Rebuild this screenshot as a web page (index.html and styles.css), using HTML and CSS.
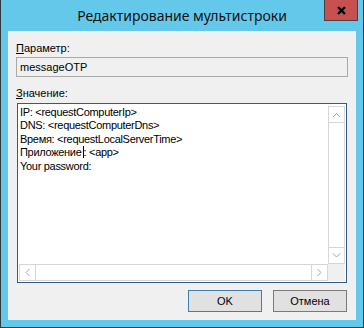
FILE: index.html
```html
<!DOCTYPE html>
<html lang="ru">
<head>
    <meta charset="UTF-8">
    <meta name="viewport" content="width=device-width, initial-scale=1.0">
    <title>Редактирование мультистроки</title>
    <link rel="stylesheet" href="styles.css">
</head>
<body>
    <div class="window">
        <div class="titlebar">
            <span class="title">Редактирование мультистроки</span>
            <button class="close-btn" title="Закрыть">
                <svg width="9" height="9" viewBox="0 0 9 9">
                    <path d="M1 1 L8 8 M8 1 L1 8" stroke="#000" stroke-width="2.4" fill="none"/>
                </svg>
            </button>
        </div>

        <div class="client">
            <label class="field-label" for="param"><u>П</u>араметр:</label>
            <div class="readonly-input" id="param">messageOTP</div>

            <label class="field-label value-label"><u>З</u>начение:</label>
            <div class="memo">
                <div class="memo-text">
                    <div>IP: &lt;requestComputerIp&gt;</div>
                    <div>DNS: &lt;requestComputerDns&gt;</div>
                    <div>Время: &lt;requestLocalServerTime&gt;</div>
                    <div>Приложение<span class="caret"></span>: &lt;app&gt;</div>
                    <div>Your password:</div>
                </div>

                <div class="vscroll">
                    <div class="sb-btn">
                        <svg width="15" height="15" viewBox="0 0 15 15">
                            <polyline points="4,10 7.5,6.5 11,10" stroke="#a6a6a6" stroke-width="1" fill="none"/>
                        </svg>
                    </div>
                    <div class="sb-track"></div>
                    <div class="sb-btn">
                        <svg width="15" height="15" viewBox="0 0 15 15">
                            <polyline points="4,5.5 7.5,9 11,5.5" stroke="#a6a6a6" stroke-width="1" fill="none"/>
                        </svg>
                    </div>
                </div>

                <div class="hscroll">
                    <div class="sb-btn">
                        <svg width="15" height="15" viewBox="0 0 15 15">
                            <polyline points="9.5,4 6,7.5 9.5,11" stroke="#a6a6a6" stroke-width="1" fill="none"/>
                        </svg>
                    </div>
                    <div class="sb-track"></div>
                    <div class="sb-btn">
                        <svg width="15" height="15" viewBox="0 0 15 15">
                            <polyline points="5.5,4 9,7.5 5.5,11" stroke="#a6a6a6" stroke-width="1" fill="none"/>
                        </svg>
                    </div>
                </div>

                <div class="sb-corner"></div>
            </div>

            <div class="dialog-buttons">
                <button class="btn btn-default">OK</button>
                <button class="btn">Отмена</button>
            </div>
        </div>
    </div>
</body>
</html>
```

FILE: styles.css
```css
body {
    margin: 0;
    font-family: "Liberation Sans", Arial, sans-serif;
    font-size: 11px;
    color: #000;
}

.window {
    width: 364px;
    height: 328px;
    box-sizing: border-box;
    background-color: #64c8eb;
    border: 1px solid #2e3a40;
    border-top: none;
    padding: 0 7px 7px 7px;
    display: flex;
    flex-direction: column;
}

.titlebar {
    height: 31px;
    display: grid;
}

.title {
    grid-area: 1 / 1;
    justify-self: center;
    padding-top: 6px;
    font-family: "Noto Sans", "Open Sans", sans-serif;
    font-size: 14px;
    line-height: 20px;
    color: #111;
}

.close-btn {
    grid-area: 1 / 1;
    justify-self: end;
    align-self: start;
    width: 34px;
    height: 21px;
    margin-right: -2px;
    padding: 0;
    border: 1px solid #4a4040;
    border-top: none;
    background-color: #c75050;
    display: flex;
    align-items: center;
    justify-content: center;
}

.client {
    flex: 1;
    background-color: #f0f0f0;
    padding: 11px 8px 0 8px;
    display: flex;
    flex-direction: column;
}

.field-label {
    line-height: 13px;
    height: 13px;
}

.field-label u {
    text-underline-offset: 1px;
}

.readonly-input {
    margin-top: 2px;
    height: 20px;
    box-sizing: border-box;
    border: 1px solid #a9a9a9;
    background-color: #f0f0f0;
    padding-left: 3px;
    line-height: 19px;
}

.value-label {
    margin-top: 10px;
}

.memo {
    margin-top: 3px;
    margin-left: 1px;
    width: 330px;
    height: 180px;
    box-sizing: border-box;
    border: 1px solid #2f5b86;
    background-color: #fff;
    padding: 1px;
    display: grid;
    grid-template-columns: 1fr 17px;
    grid-template-rows: 1fr 17px;
}

.memo-text {
    padding: 1px 0 0 1px;
    line-height: 13.4px;
    letter-spacing: -0.3px;
    white-space: nowrap;
    overflow: hidden;
}

.caret {
    display: inline-block;
    width: 1px;
    height: 12px;
    margin-left: 1px;
    background-color: #000;
    vertical-align: -2px;
}

.vscroll {
    display: flex;
    flex-direction: column;
    border: 1px solid #d6d6d6;
    box-sizing: border-box;
    margin-top: 1px;
}

.hscroll {
    display: flex;
    border: 1px solid #d6d6d6;
    box-sizing: border-box;
}

.sb-btn {
    width: 15px;
    height: 15px;
    display: flex;
}

.vscroll .sb-btn:first-child {
    border-bottom: 1px solid #d6d6d6;
}

.vscroll .sb-btn:last-child {
    border-top: 1px solid #d6d6d6;
}

.hscroll .sb-btn:first-child {
    border-right: 1px solid #d6d6d6;
}

.hscroll .sb-btn:last-child {
    border-left: 1px solid #d6d6d6;
}

.sb-track {
    flex: 1;
}

.sb-corner {
    background-color: #f0f0f0;
}

.dialog-buttons {
    margin-top: 7px;
    padding-right: 1px;
    display: flex;
    justify-content: flex-end;
    gap: 11px;
}

.btn {
    width: 74px;
    height: 22px;
    padding: 0;
    border: 1px solid #7a7a7a;
    background-color: #e1e1e1;
    font-family: "Liberation Sans", Arial, sans-serif;
    font-size: 11px;
    color: #000;
}

.btn-default {
    border-color: #3c7fb1;
}
```
